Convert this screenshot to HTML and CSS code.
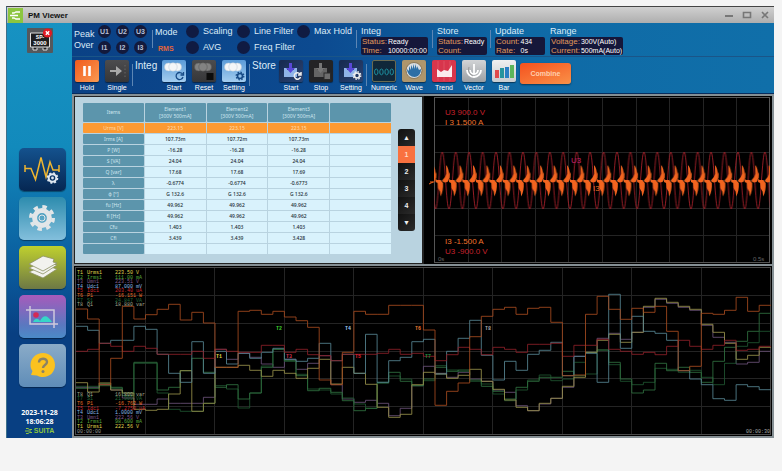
FILE: index.html
```html
<!DOCTYPE html>
<html lang="en">
<head>
<meta charset="utf-8">
<title>PM Viewer</title>
<link rel="stylesheet" href="styles.css">
</head>
<body>
<div class="window">
  <header class="titlebar">
    <svg class="app-logo" viewBox="0 0 15 15"><rect width="15" height="15" fill="#8cc63f"/><path d="M4 5h2l2-1h4M2 7.5h8M4 10h2l2 1h4" stroke="#fff" stroke-width="1.3" fill="none"/></svg>
    <h1>PM Viewer</h1>
    <div class="win-buttons">
      <button type="button" aria-label="Minimize"><svg viewBox="0 0 10 10"><path d="M1 6h8" stroke="#777" stroke-width="2"/></svg></button>
      <button type="button" aria-label="Maximize"><svg viewBox="0 0 10 10"><path d="M1.5 2.5h7v5h-7z" fill="none" stroke="#777" stroke-width="1.6"/></svg></button>
      <button type="button" aria-label="Close"><svg viewBox="0 0 10 10"><path d="M2 2l6 6M8 2l-6 6" stroke="#777" stroke-width="1.6"/></svg></button>
    </div>
  </header>
  <div class="body">
    <aside class="sidebar">
      <button type="button" class="device" aria-label="Device">
        <svg viewBox="0 0 26 25"><rect width="26" height="25" rx="1" fill="#55585c"/><path d="M3.500 5h19v14h-19zM6 19v3h4v-2M20 19v3h-4v-2" fill="#1d1d1f" stroke="#ddd" stroke-width="1"/><text x="13" y="11" class="dev-a">SP-</text><text x="13" y="16.500" class="dev-b">3000</text><circle cx="20.500" cy="5" r="4.600" fill="#e01b24"/><path d="M18.800 3.300l3.400 3.400M22.200 3.300l-3.400 3.400" stroke="#fff" stroke-width="1.400"/></svg>
      </button>
      <nav class="nav">
        <button type="button" class="n1" aria-label="Measure"><svg viewBox="0 0 47 43"><path d="M6 17v7M6 20.500h6l4.500 11L22 9.500l5 19.500 4-15 3 8h6M40 17v7" fill="none" stroke="#eeb530" stroke-width="1.500"/><circle cx="33.500" cy="30" r="3.800" fill="none" stroke="#dfe7f0" stroke-width="2"/><circle cx="33.500" cy="30" r="5" fill="none" stroke="#dfe7f0" stroke-width="1.600" stroke-dasharray="2 1.930"/><circle cx="33.500" cy="30" r="1.400" fill="#dfe7f0"/></svg></button>
        <button type="button" class="n2" aria-label="Settings"><svg viewBox="0 0 47 43"><circle cx="23" cy="21" r="7.400" fill="none" stroke="#e2e6e8" stroke-width="5"/><circle cx="23" cy="21" r="11.200" fill="none" stroke="#e2e6e8" stroke-width="3.600" stroke-dasharray="4.400 4.396"/><circle cx="23" cy="21" r="3" fill="none" stroke="#e2e6e8" stroke-width="1"/></svg></button>
        <button type="button" class="n3" aria-label="Layers"><svg viewBox="0 0 47 43"><g fill="#f2f2ee" stroke="#8c9163" stroke-width=".8"><path d="M10 26l15-7 13 4-14 9z"/><path d="M10 22l15-7 13 4-14 9z"/><path d="M10 18l14-8 11 3-1 3 4 1-14 8z"/></g></svg></button>
        <button type="button" class="n4" aria-label="Capture"><svg viewBox="0 0 47 43"><path d="M11 11v18h28M7 15h28v18" fill="none" stroke="#cfc9dc" stroke-width="1.500"/><circle cx="17" cy="20" r="2.800" fill="#d42a55"/><path d="M14 27c2-4 5-4 7-1 3-6 7-7 12 1z" fill="#36d6c8"/></svg></button>
        <button type="button" class="n5" aria-label="Help"><svg viewBox="0 0 47 43"><path d="M24 9c7 0 12 5 12 12s-5 12-12 12c-2 0-4 0-6-1.500L12 31l1.500-4C12 25 11.500 23 11.500 21 11.500 14 17 9 24 9z" fill="#fbc21f"/><path d="M20 18.500c0-5 8-5 8-.5 0 3-4 3-4 6" fill="none" stroke="#8a8266" stroke-width="2.400"/><circle cx="24" cy="27.500" r="1.500" fill="#8a8266"/></svg></button>
      </nav>
      <div class="clock">
        <time>2023-11-28</time>
        <time>18:06:28</time>
        <span class="brand"><svg viewBox="0 0 8 8"><path d="M1 1.500h2l1.500 1H7M0 4h6M1 6.500h2l1.500-1H7" fill="none" stroke="#8cc63f"/></svg>SUITA</span>
      </div>
    </aside>
    <main class="main">
      <section class="status">
        <div class="peak"><span>Peak</span><span>Over</span></div>
        <div class="lamps"><i>U1</i><i>U2</i><i>U3</i><i>I1</i><i>I2</i><i>I3</i></div>
        <div class="mode"><span>Mode</span><b>RMS</b></div>
        <div class="flags f1"><span>Scaling</span><span>AVG</span></div>
        <div class="flags f2"><span>Line Filter</span><span>Freq Filter</span></div>
        <div class="flags f3"><span>Max Hold</span></div>
        <div class="info i1"><h2>Integ</h2><dl><dt>Status:</dt><dd>Ready</dd><dt>Time:</dt><dd>10000:00:00</dd></dl></div>
        <div class="info i2"><h2>Store</h2><dl><dt>Status:</dt><dd>Ready</dd><dt>Count:</dt><dd></dd></dl></div>
        <div class="info i3"><h2>Update</h2><dl><dt>Count:</dt><dd>434</dd><dt>Rate:</dt><dd>0s</dd></dl></div>
        <div class="info i4"><h2>Range</h2><dl><dt>Voltage:</dt><dd>300V(Auto)</dd><dt>Current:</dt><dd>500mA(Auto)</dd></dl></div>
      </section>
      <section class="tools">
        <div class="group">
          <button type="button" class="tool orange"><svg viewBox="0 0 24 22"><path d="M9.500 6v10M14.500 6v10" stroke="#fff" stroke-width="2.600"/></svg>Hold</button>
          <button type="button" class="tool dark"><svg viewBox="0 0 24 22"><path d="M5 10h6V6l6 5-6 5v-4H5z" fill="#a9a9a9"/><path d="M20 5v13" stroke="#666" stroke-dasharray="1.500 2"/></svg>Single</button>
        </div>
        <div class="group"><h2>Integ</h2>
          <button type="button" class="tool sky"><svg viewBox="0 0 24 22"><g fill="#f4f6f8" stroke="#b9c6d2" stroke-width=".5"><circle cx="6.500" cy="7" r="4"/><circle cx="15.500" cy="7" r="4"/><circle cx="11" cy="7" r="4.200"/></g><path d="M20.500 14a3.500 3.500 0 1 0 .5 3M21.500 12v3h-3" fill="none" stroke="#174a86" stroke-width="1.300"/></svg>Start</button>
          <button type="button" class="tool dark"><svg viewBox="0 0 24 22"><g fill="#828282" stroke="#555" stroke-width=".5"><circle cx="6.500" cy="7" r="4"/><circle cx="15.500" cy="7" r="4"/><circle cx="11" cy="7" r="4.200"/></g><rect x="14.500" y="13" width="7" height="7" fill="#0c0c0c"/></svg>Reset</button>
          <button type="button" class="tool sky"><svg viewBox="0 0 24 22"><g fill="#f4f6f8" stroke="#b9c6d2" stroke-width=".5"><circle cx="6.500" cy="7" r="4"/><circle cx="15.500" cy="7" r="4"/><circle cx="11" cy="7" r="4.200"/></g><circle cx="18" cy="16" r="2.500" fill="none" stroke="#174a86" stroke-width="1.600"/><circle cx="18" cy="16" r="3.800" fill="none" stroke="#174a86" stroke-width="1.300" stroke-dasharray="1.500 1.480"/></svg>Setting</button>
        </div>
        <div class="group"><h2>Store</h2>
          <button type="button" class="tool navy"><svg viewBox="0 0 24 22"><path d="M5 8h3v2h7V8h3v9H5z" fill="#8fb4e8"/><path d="M10 3h3v5h3l-4.500 5L7 8h3z" fill="#5a49d8"/><path d="M21 14a3.200 3.200 0 1 0 .5 3M22 12v3h-3" fill="none" stroke="#eee" stroke-width="1.500"/></svg>Start</button>
          <button type="button" class="tool black"><svg viewBox="0 0 24 22"><path d="M5 8h3v2h7V8h3v9H5z" fill="#656565"/><path d="M10 3h3v5h3l-4.500 5L7 8h3z" fill="#777"/><rect x="15" y="13" width="6.500" height="6.500" fill="#6e6e6e" stroke="#2a2a2a"/></svg>Stop</button>
          <button type="button" class="tool navy"><svg viewBox="0 0 24 22"><path d="M5 8h3v2h7V8h3v9H5z" fill="#8fb4e8"/><path d="M10 3h3v5h3l-4.500 5L7 8h3z" fill="#5a49d8"/><circle cx="18" cy="15.500" r="2.500" fill="#233a66" stroke="#eee" stroke-width="1.600"/><circle cx="18" cy="15.500" r="3.800" fill="none" stroke="#eee" stroke-width="1.300" stroke-dasharray="1.500 1.480"/></svg>Setting</button>
        </div>
        <div class="group">
          <button type="button" class="tool num"><svg viewBox="0 0 24 22"><g fill="none" stroke="#1d94a4" stroke-width="1"><ellipse cx="3.500" cy="12" rx="1.900" ry="3.200"/><ellipse cx="9.200" cy="12" rx="1.900" ry="3.200"/><ellipse cx="14.900" cy="12" rx="1.900" ry="3.200"/><ellipse cx="20.500" cy="12" rx="1.900" ry="3.200"/></g></svg>Numeric</button>
          <button type="button" class="tool wav"><svg viewBox="0 0 24 22"><circle cx="12" cy="10.500" r="8" fill="#d9dde0" stroke="#7b6645" stroke-width=".8"/><path d="M5 9l2 2V6l2 4V5l2 4V4l2 5V4l2 5V6l2 4 2-1c0 5-3 8-6.500 8S5 14 5 9z" fill="#2d6fa6"/></svg>Wave</button>
          <button type="button" class="tool red"><svg viewBox="0 0 24 22"><path d="M5 17V9l4 3 3-2 4 1 4-6v12z" fill="#fff" opacity=".9"/><path d="M6 1v20M12 1v20M18 1v20" stroke="#fff" opacity=".25" stroke-width=".5"/></svg>Trend</button>
          <button type="button" class="tool gray"><svg viewBox="0 0 24 22"><path d="M5 10a7 7 0 1 0 14 0M8 10a4 4 0 1 0 8 0M12 4v11" fill="none" stroke="#fff" stroke-width="1.800"/><path d="M7 7a7 7 0 0 0 4 9" fill="none" stroke="#888" stroke-width=".7"/></svg>Vector</button>
          <button type="button" class="tool pale"><svg viewBox="0 0 24 22"><rect x="3" y="10" width="4" height="8" fill="#e04b4b"/><rect x="8" y="8" width="4" height="10" fill="#27949d"/><rect x="13" y="7" width="4" height="11" fill="#2b7fc4"/><rect x="18" y="5" width="4" height="13" fill="#5cb65a"/></svg>Bar</button>
        </div>
        <button type="button" class="combine">Combine</button>
      </section>
      <section class="panes">
        <div class="numeric">
          <table>
            <thead><tr><th>Items</th><th>Element1<br>[300V 500mA]</th><th>Element2<br>[300V 500mA]</th><th>Element3<br>[300V 500mA]</th><th></th></tr></thead>
            <tbody>
              <tr class="sel"><th>Urms [V]</th><td>223.15</td><td>223.15</td><td>223.15</td><td></td></tr>
              <tr><th>Irms [A]</th><td>107.73m</td><td>107.72m</td><td>107.73m</td><td></td></tr>
              <tr><th>P [W]</th><td>-16.28</td><td>-16.28</td><td>-16.28</td><td></td></tr>
              <tr><th>S [VA]</th><td>24.04</td><td>24.04</td><td>24.04</td><td></td></tr>
              <tr><th>Q [var]</th><td>17.68</td><td>17.68</td><td>17.69</td><td></td></tr>
              <tr><th>λ</th><td>-0.6774</td><td>-0.6774</td><td>-0.6773</td><td></td></tr>
              <tr><th>φ [°]</th><td>G 132.6</td><td>G 132.6</td><td>G 132.6</td><td></td></tr>
              <tr><th>fu [Hz]</th><td>49.962</td><td>49.962</td><td>49.962</td><td></td></tr>
              <tr><th>fi [Hz]</th><td>49.962</td><td>49.962</td><td>49.962</td><td></td></tr>
              <tr><th>Cfu</th><td>1.403</td><td>1.403</td><td>1.403</td><td></td></tr>
              <tr><th>Cfi</th><td>3.439</td><td>3.439</td><td>3.428</td><td></td></tr>
              <tr><th></th><td></td><td></td><td></td><td></td></tr>
            </tbody>
          </table>
          <div class="pager">
            <button type="button" aria-label="Previous page">▲</button>
            <button type="button" class="on">1</button>
            <button type="button">2</button>
            <button type="button">3</button>
            <button type="button">4</button>
            <button type="button" aria-label="Next page">▼</button>
          </div>
        </div>
        <svg class="wave" viewBox="0 0 348 168">
          <defs>
            <pattern id="cycle" x="11.580" y="0" width="13.440" height="168" patternUnits="userSpaceOnUse">
              <path d="M0 113C2.700 113 4 56 6.720 56S10.740 113 13.440 113" fill="none" stroke="#a51f28" stroke-width=".9"/>
              <path d="M0 83l1.500 1 3.500 0 2.500 3c.3 5-.5 10-2.500 13.500l-.6-5-2-3.500L2 87 0 86z" fill="#f2641f"/>
              <path d="M7 84l2.500-3 1.300-3-.3-9c2 2 2.900 6 2.900 10v4l-1.400 3-3 .5-2-1z" fill="#f2641f"/>
              <path d="M0 76l.8 2-.2 4-.6 1z" fill="#f2641f"/>
            </pattern>
          </defs>
          <rect width="348" height="168" fill="#000"/>
          <g class="grid" id="wave-grid"></g>
          <rect x="10.500" y="1.500" width="335" height="165" fill="none" stroke="#555"/>
          <rect x="10" y="1" width="336" height="166" fill="url(#cycle)"/>
          <path d="M5 88l4-2M6 86h4" stroke="#f2641f"/>
          <g class="scale">
            <text x="21" y="19" fill="#c9202c">U3  900.0 V</text>
            <text x="21" y="29" fill="#f0742c">I 3  1.500 A</text>
            <text x="21" y="148" fill="#f0742c">I3  -1.500 A</text>
            <text x="21" y="158" fill="#c9202c">U3  -900.0 V</text>
            <text x="147" y="67" fill="#c4206a">U3</text>
            <text x="169" y="95" fill="#f0742c">I3</text>
          </g>
          <text class="axis" x="14" y="165">0s</text>
          <text class="axis" x="329" y="165">0.5s</text>
        </svg>
        <svg class="trend" viewBox="0 0 698 170">
          <rect width="698" height="170" fill="#000"/>
          <g class="grid" id="trend-grid"></g>
          <rect x="1.500" y="1.500" width="695" height="167" fill="none" stroke="#4a4a4a"/>
          <g id="traces"></g>
          <g id="legend" class="mono"></g>
          <g class="tags">
            <text x="142" y="92" fill="#e0d840">T1</text><text x="202" y="64" fill="#3fd030">T2</text>
            <text x="212" y="92" fill="#d03050">T3</text><text x="271" y="64" fill="#9cc8f0">T4</text>
            <text x="281" y="92" fill="#e02030">T5</text><text x="341" y="64" fill="#e87830">T6</text>
            <text x="351" y="92" fill="#209040">T7</text><text x="411" y="64" fill="#a8a8a8">T8</text>
          </g>
          <text class="mono" x="3" y="167" fill="#999">00:00:00</text>
          <text class="mono" x="672" y="167" fill="#aaa">00:00:30</text>
        </svg>
      </section>
    </main>
  </div>
</div>
<script src="charts.js"></script>
</body>
</html>
```
FILE: styles.css
```css
* { box-sizing: border-box; }
body { margin: 0; padding: 6px 8px 32px 7px; background: #f4f4f4; font: 9px/11px "Liberation Sans", sans-serif; color: #dcebf7; }
h1, h2, dl, dd { margin: 0; }
h2 { font-weight: normal; font-size: 9px; }
button { border: 0; padding: 0; margin: 0; font: inherit; color: inherit; background: none; }
svg { display: block; }

.window { border-top: 1px solid #444; border-left: 1px solid #3c6f8a; margin-left: -1px; }
.titlebar { display: flex; align-items: center; height: 16px; background: linear-gradient(#d0d0d0, #aeaeae); }
.titlebar h1 { flex: 1; margin-left: 5px; font-size: 8px; color: #111; }
.app-logo { width: 15px; height: 15px; margin-left: 1px; }
.win-buttons { display: flex; gap: 8px; padding-right: 4px; }
.win-buttons svg { width: 10px; height: 10px; }

.body { display: grid; grid-template-columns: 65px 1fr; }
.sidebar { display: flex; flex-direction: column; align-items: center; padding-top: 5px; background: linear-gradient(#1792c2, #128abc 30%, #0a5a9c 60%, #083f82 75%); }
.device { width: 26px; height: 25px; }
.dev-a, .dev-b { font: bold 5px "Liberation Sans", sans-serif; fill: #fff; text-anchor: middle; }
.dev-b { font-size: 6px; }
.nav { display: flex; flex-direction: column; gap: 6px; margin: 95px 0 21px 6px; }
.nav button { width: 47px; height: 43px; border-radius: 5px; box-shadow: 0 1px 1px #0006; overflow: hidden; }
.n1 { background: linear-gradient(#14528e, #062752); }
.n2 { background: linear-gradient(#2d8cae, #83bfdc); }
.n3 { background: linear-gradient(#bfd02e, #6d7845); }
.n4 { background: linear-gradient(#a75bbb, #5a78c0 70%, #4b8bc8); }
.n5 { background: linear-gradient(#8aabc8, #5f8db8); }
.clock { display: flex; flex-direction: column; align-items: center; font: bold 7px/9px "Open Sans", sans-serif; color: #fff; }
.brand { display: flex; align-items: center; gap: 1px; color: #8cc63f; font-family: "Liberation Sans", sans-serif; }
.brand svg { width: 8px; height: 8px; }

.main { background: linear-gradient(90deg, #0a4185, #0c4a90 35%, #0f6aa6 65%, #106fa9); min-width: 0; }
.status { display: flex; height: 34px; border-bottom: 1px solid #1a5588; white-space: nowrap; }
.peak { display: flex; flex-direction: column; width: 26px; padding: 6px 0 0 2px; }
.lamps { display: grid; grid-template-columns: repeat(3, 13px); grid-auto-rows: 13px; gap: 3px 5px; align-content: start; width: 54px; padding-top: 2px; }
.lamps i { border-radius: 50%; background: #131a3c; font: bold 7px/13px "Liberation Sans", sans-serif; text-align: center; color: #b6c0d8; }
.mode { width: 31px; padding: 4px 0 0 3px; }
.mode span { display: block; margin-bottom: 5px; }
.mode b { margin-left: 3px; font-size: 7px; color: #e2643a; }
.mode, .info { position: relative; }
.mode::before, .info::before, .group + .group::before { content: ""; width: 1px; background: #5d86b4; position: absolute; left: 0; top: 7px; height: 18px; }
.flags { display: grid; grid-auto-rows: 14px; gap: 2px; align-content: start; padding-top: 1px; }
.flags span { display: flex; align-items: center; gap: 4px; }
.flags span::before { content: ""; width: 13px; height: 13px; border-radius: 50%; background: #101b42; }
.f1 { width: 54px; padding-left: 3px; }
.f2 { width: 60px; }
.f3 { width: 59px; }
.info { padding: 2px 0 0 5px; }
.i1 { width: 76px; }
.i2 { width: 58px; }
.i3 { width: 55px; }
.i4 { width: 85px; }
.i4::before { display: none; }
.info h2 { line-height: 12px; }
.info dl { display: grid; grid-template-columns: auto 1fr; grid-auto-rows: 9px; column-gap: 1px; width: fit-content; min-width: 50px; height: 18px; padding: 0 1px; border-radius: 2px; background: #15173a; overflow: hidden; }
.info dt { font-size: 8px; line-height: 9px; color: #e09a5c; }
.info dd { font-size: 7px; line-height: 9px; color: #fff; }

.tools { display: flex; height: 37px; border-bottom: 1px solid #072c5c; }
.group { display: flex; position: relative; }
.group + .group { padding-left: 3px; }
.group + .group::before { top: 7px; height: 22px; left: 0; }
.group h2 { width: 24px; padding-top: 3px; font-size: 10px; }
.tool { display: flex; flex-direction: column; align-items: center; gap: 1px; width: 30px; padding-top: 3px; font-size: 7px; line-height: 9px; color: #fff; }
.tool svg { width: 24px; height: 22px; border-radius: 2px; background: #333; box-shadow: 0 1px 1px #0007; }
.orange svg { background: linear-gradient(135deg, #f05a1c, #fb9a52); }
.dark svg { background: linear-gradient(#4c4c4e, #363638); }
.black svg { background: #242426; }
.sky svg { background: linear-gradient(#5b9bd8, #a3cdf0); }
.navy svg { background: linear-gradient(135deg, #16294f, #2a4372); }
.num svg { background: #10283a; border: 1px solid #6a6a50; }
.wav svg { background: #ae966c; }
.red svg { background: #d8364c; }
.gray svg { background: linear-gradient(#d2d4d6, #9ca0a4); }
.pale svg { background: linear-gradient(#f0f0f0, #c8cccf); }
.combine { align-self: flex-start; width: 51px; height: 21px; margin: 6px 0 0 1px; border-radius: 3px; background: linear-gradient(160deg, #f4511e, #fa9148); box-shadow: 0 1px 2px #0007; font-size: 7px; font-weight: bold; color: #ffcfae; }

.panes { display: grid; grid-template-columns: 350fr 348fr; gap: 2px 0; padding: 2px; background: #858f94; }
.numeric { display: flex; align-items: flex-start; background: #b9d3e0; border: 1px solid #222; border-right-width: 2px; padding: 5px 7px 0 7px; }
.numeric table { flex: 1; width: 100%; table-layout: fixed; border-collapse: separate; border-spacing: 1px; font: 5px/7px "Noto Sans", sans-serif; color: #1c2c34; text-align: center; }
.numeric th, .numeric td { height: 10px; padding: 0; }
.numeric td { background: #d9f2fc; font-weight: 500; }
.numeric th { background: #5c95ac; color: #cfe6ef; font-weight: normal; border-radius: 1px; }
.numeric thead th { height: 19px; }
.numeric .sel th, .numeric .sel td { background: #fd9a32; color: #ffd9a8; }
.pager { display: flex; flex-direction: column; flex: none; width: 17px; margin: 27px 0 0 6px; border-radius: 3px; overflow: hidden; }
.pager button { height: 17px; background: linear-gradient(135deg, #111, #2b2b2b); color: #eee; font: bold 7px/17px "Liberation Sans", "DejaVu Sans", sans-serif; }
.pager .on { background: #f9713f; color: #ffd9c4; }

.wave, .trend { width: 100%; height: auto; }
.trend { grid-column: 1 / -1; }
.grid { stroke: #242424; fill: none; }
.scale { font: 8px "Liberation Sans", sans-serif; white-space: pre; }
.axis { font: 6px "Liberation Sans", sans-serif; fill: #666; }
.mono { font: 5px "Liberation Mono", monospace; }
.tags { font: bold 5px "Liberation Mono", monospace; }
.trace { fill: none; stroke-width: 1; opacity: .85; }
```
FILE: charts.js
```js
function draw(parent, tag, attrs, text) {
  const el = document.createElementNS("http://www.w3.org/2000/svg", tag);
  for (const k in attrs) el.setAttribute(k, attrs[k]);
  if (text) el.textContent = text;
  parent.appendChild(el);
}

function grid(id, x, y, w, h) {
  const g = document.getElementById(id);
  for (let i = 1; i < 10; i++) draw(g, "path", { d: `M${Math.round(x + w * i / 10) + 0.5} ${y}v${h}` });
  for (let i = 1; i < 6; i++) {
    draw(g, "path", { d: `M${x} ${Math.round(y + h * i / 6) + 0.5}h${w}` });
  }
}
grid("wave-grid", 10, 1, 336, 166);
grid("trend-grid", 1, 1, 695, 167);

/* Sixty samples a trace; levels are thirds of a unit down from the top. */
const traces = {
  "#6a5178": [370,370,362,378,402,421,421,405,418,418,418,400,256,286,268,280,300,310,286,316, 298,275,362,405,415,409,418,455,433,365,307,328,340,325,345,352,378,385,425,440,420, 403,370,277,265,223,208,226,205,130,106,118,130,139,184,220,235,300,295,262],
  "#1f5530": [367,367,358,373,387,298,298,387,436,442,442,418,365,375,432,387,306,256,292,331, 375,378,390,402,420,433,358,336,345,365,350,305,318,322,352,360,390,410,378,348,333, 350,345,295,330,258,302,352,362,355,313,316,325,319,340,362,298,247,236,202,140],
  "#2f7040": [373,373,365,370,395,295,295,378,370,320,283,325,370,362,405,387,310,256,290,335, 380,373,385,410,440,433,355,325,352,365,345,310,322,318,348,367,382,405,370,352,340, 340,322,335,265,258,295,345,387,378,298,320,310,325,355,292,250,232,202,148],
  "#96904a": [356,384,357,378,387,436,439,436,390,320,442,418,310,310,304,319,337,319,328,343, 313,286,360,310,328,361,430,460,451,362,325,330,343,334,316,352,376,408,430,440,418, 403,367,340,265,229,211,235,205,127,103,115,127,136,181,205,238,286,274,250],
  "#568592": [187,199,238,229,229,187,196,271,328,355,233,328,262,300,268,283,265,253,286,292, 283,238,290,271,328,211,355,290,280,233,226,330,262,223,169,274,348,292,319,271,259, 235,335,277,268,355,91,253,157,202,208,229,320,345,362,404,409,362,368,377],
  "#8c2028": [262,256,238,247,262,247,253,271,271,271,262,283,256,262,265,265,244,244,265,256, 272,275,290,271,271,271,268,256,271,268,277,290,272,250,256,272,250,256,265,241,241, 238,277,244,244,226,256,262,271,265,272,247,229,247,256,244,229,259,256,247],
  "#a44a1e": [135,165,362,283,127,165,152,136,121,168,145,177,310,310,142,139,151,142,159,170, 190,348,362,265,142,151,151,124,124,124,198,424,382,357,218,157,136,130,151,133,130, 175,335,333,151,97,136,166,133,145,127,202,320,307,148,151,139,100,142,124]
};
for (const [color, levels] of Object.entries(traces)) {
  let d = "";
  levels.slice(0, 60).forEach((v, i) => {
    const x = (2 + i * 11.58).toFixed(1);
    d += (i ? `H${x}V` : `M${x} `) + (v / 3 - 2).toFixed(1);
  });
  draw(document.getElementById("traces"), "path", { class: "trace", stroke: color, d: d + "H697" });
}

const channels = [
  ["T1", "Urms1", "223.50 V", "222.56 V", "#e0d850"],
  ["T2", "Irms1", "111.00 mA", "98.600 mA", "#58a83c"],
  ["T3", "Umn1", "223.51 V", "222.56 V", "#80588c"],
  ["T4", "Udc1", "87.000 mV", "1.0000 mV", "#88b8e8"],
  ["T5", "Idc1", "203.40 uA", "-7.2750 uA", "#c82830"],
  ["T6", "P1", "-16.151 W", "-16.762 W", "#e87028"],
  ["T7", "S1", "24.847 VA", "21.909 VA", "#226638"],
  ["T8", "Q1", "18.880 var", "16.800 var", "#a0a890"]
];
const legend = document.getElementById("legend");
channels.forEach(([id, name, max, min, fill], i) => {
  [[max, 8 + i * 4.6], [min, 162 - i * 4.6]].forEach(([value, y]) => {
    draw(legend, "text", { x: 3, y, fill }, id);
    draw(legend, "text", { x: 13, y, fill }, name);
    draw(legend, "text", { x: 41, y, fill }, value);
  });
});
```
